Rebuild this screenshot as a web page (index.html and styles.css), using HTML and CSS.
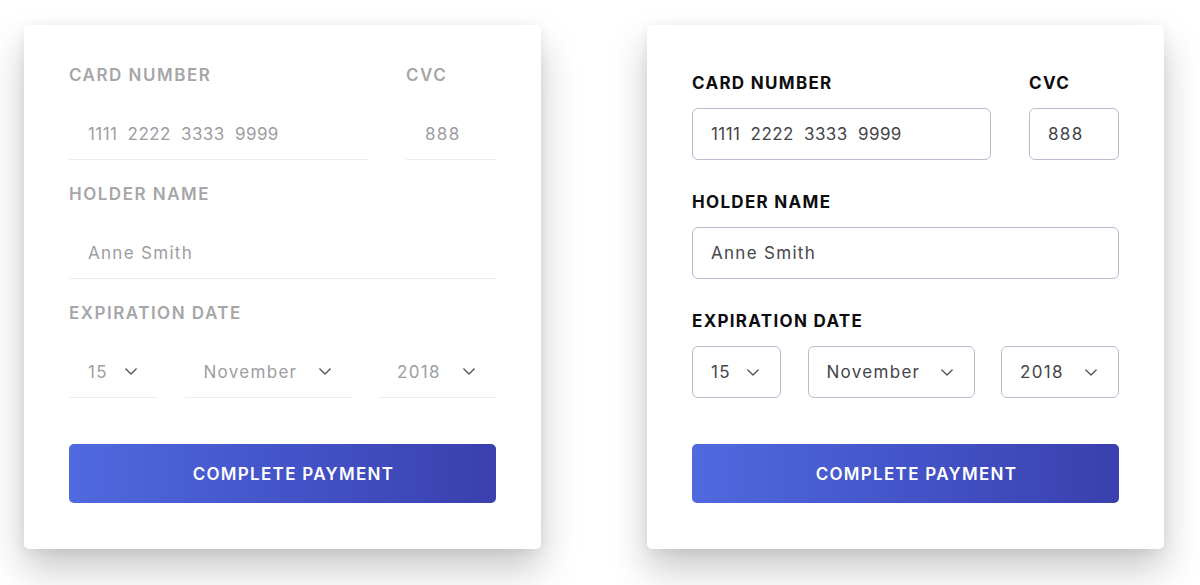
FILE: index.html
```html
<!DOCTYPE html>
<html>
<head>
<meta charset="utf-8">
<link rel="stylesheet" href="styles.css">
</head>
<body>
<div class="page">
  <form class="card card--flat">
    <div class="row">
      <div class="field field--grow">
        <div class="label">CARD NUMBER</div>
        <div class="input input--digits">1111  2222  3333  9999</div>
      </div>
      <div class="field field--cvc">
        <div class="label">CVC</div>
        <div class="input">888</div>
      </div>
    </div>
    <div class="field">
      <div class="label">HOLDER NAME</div>
      <div class="input">Anne Smith</div>
    </div>
    <div class="field">
      <div class="label">EXPIRATION DATE</div>
      <div class="selects">
        <div class="input select"><span>15</span><svg class="chev" viewBox="0 0 14 8"><polyline points="1,1 7,7 13,1"/></svg></div>
        <div class="input select"><span>November</span><svg class="chev" viewBox="0 0 14 8"><polyline points="1,1 7,7 13,1"/></svg></div>
        <div class="input select"><span>2018</span><svg class="chev" viewBox="0 0 14 8"><polyline points="1,1 7,7 13,1"/></svg></div>
      </div>
    </div>
    <div class="button">COMPLETE PAYMENT</div>
  </form>

  <form class="card card--boxed">
    <div class="row">
      <div class="field field--grow">
        <div class="label">CARD NUMBER</div>
        <div class="input input--digits">1111  2222  3333  9999</div>
      </div>
      <div class="field field--cvc">
        <div class="label">CVC</div>
        <div class="input">888</div>
      </div>
    </div>
    <div class="field">
      <div class="label">HOLDER NAME</div>
      <div class="input">Anne Smith</div>
    </div>
    <div class="field">
      <div class="label">EXPIRATION DATE</div>
      <div class="selects">
        <div class="input select"><span>15</span><svg class="chev" viewBox="0 0 14 8"><polyline points="1,1 7,7 13,1"/></svg></div>
        <div class="input select"><span>November</span><svg class="chev" viewBox="0 0 14 8"><polyline points="1,1 7,7 13,1"/></svg></div>
        <div class="input select"><span>2018</span><svg class="chev" viewBox="0 0 14 8"><polyline points="1,1 7,7 13,1"/></svg></div>
      </div>
    </div>
    <div class="button">COMPLETE PAYMENT</div>
  </form>
</div>
</body>
</html>
```

FILE: styles.css
```css
* { box-sizing: border-box; }

html, body {
  margin: 0;
  background: #ffffff;
  font-family: Inter, "Open Sans", sans-serif;
}

.page {
  display: flex;
  align-items: flex-start;
  gap: 106px;
  padding: 25px 0 0 24px;
  height: 585px;
}

.card {
  width: 517px;
  height: 524px;
  background: #fff;
  border-radius: 5px;
  box-shadow: 0 20px 38px rgba(0, 0, 0, 0.22), 0 2px 12px rgba(0, 0, 0, 0.06);
  padding: 40px 45px 46px;
  display: flex;
  flex-direction: column;
  gap: 24px;
}

.card--boxed {
  padding-top: 48px;
  gap: 32px;
}

.row {
  display: flex;
  gap: 38px;
}

.field {
  display: flex;
  flex-direction: column;
}

.field--grow { flex: 1; }
.field--cvc { width: 90px; }

.label {
  font-size: 17px;
  line-height: 20px;
  font-weight: 600;
  letter-spacing: 1.5px;
  color: #a6a6a8;
  margin-bottom: 23px;
}

.card--boxed .label {
  color: #0d0d0f;
  font-weight: 700;
  letter-spacing: 1.3px;
  margin-bottom: 15px;
}

.input {
  height: 52px;
  display: flex;
  align-items: center;
  padding: 0 19px;
  font-size: 17px;
  letter-spacing: 1.3px;
  white-space: pre;
  color: #9d9da2;
  border-bottom: 1px solid #ececf1;
}

.input--digits {
  letter-spacing: 0.4px;
}

.card--boxed .input {
  color: #45454a;
  border: 1.5px solid #b9bccd;
  border-radius: 6px;
  padding-left: 18px;
}

.selects {
  display: grid;
  grid-template-columns: 89px 167px 118px;
  justify-content: space-between;
}

.select {
  justify-content: space-between;
  padding: 0 21px 0 19px;
}

.chev {
  width: 12px;
  height: 7px;
  fill: none;
  stroke: #55555a;
  stroke-width: 1.6;
  stroke-linecap: round;
  stroke-linejoin: round;
}

.button {
  margin-top: 22px;
  height: 59px;
  border-radius: 5px;
  background: linear-gradient(90deg, #5069df 0%, #4352c6 55%, #3a40ad 100%);
  color: #fff;
  display: flex;
  align-items: center;
  justify-content: center;
  padding-left: 22px;
  font-size: 17px;
  font-weight: 600;
  letter-spacing: 1.3px;
}

.card--boxed .button {
  margin-top: 14px;
}
```
